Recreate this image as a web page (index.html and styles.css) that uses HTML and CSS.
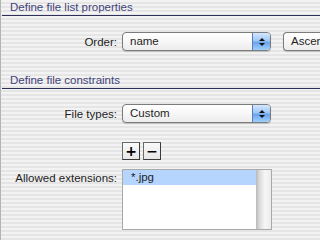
FILE: index.html
```html
<!DOCTYPE html>
<html lang="en">
<head>
  <meta charset="utf-8">
  <title>File list options</title>
  <link rel="stylesheet" href="styles.css">
</head>
<body>

<div class="pane">

  <!-- list properties -->
  <div class="group-title">Define file list properties</div>
  <div class="form-row order-row">
    <span class="field-label">Order:</span>
    <div class="popup">
      <span class="popup-text">name</span>
      <span class="stepper"><i class="arrow-up"></i><i class="arrow-down"></i></span>
    </div>
    <div class="push-button">Ascending</div>
  </div>

  <!-- constraints -->
  <div class="group-title second">Define file constraints</div>
  <div class="form-row types-row">
    <span class="field-label">File types:</span>
    <div class="popup">
      <span class="popup-text">Custom</span>
      <span class="stepper"><i class="arrow-up"></i><i class="arrow-down"></i></span>
    </div>
  </div>

  <div class="form-row buttons-row">
    <span></span>
    <div class="small-buttons">
      <div class="square-button">+</div>
      <div class="square-button">&minus;</div>
    </div>
  </div>

  <div class="form-row list-row">
    <span class="field-label">Allowed extensions:</span>
    <div class="list-box">
      <div class="list-items">
        <div class="list-item selected">*.jpg</div>
      </div>
      <div class="scroll-track"></div>
    </div>
  </div>

</div>

</body>
</html>
```

FILE: styles.css
```css
*{
  box-sizing: border-box;
}

html, body{
  margin: 0;
  height: 100%;
  overflow: hidden;
}

body{
  font-family: "Liberation Sans", Arial, sans-serif;
  font-size: 11.5px;
  color: #1e1e1e;
  background: repeating-linear-gradient(to bottom, #f3f3f3 0px, #f3f3f3 2px, #e5e5e5 2px, #e5e5e5 4px);
}

.pane{
  height: 100%;
  border-left: 1px solid #b4b4b4;
}

.group-title{
  height: 16px;
  line-height: 15px;
  padding-left: 8px;
  margin-left: 1px;
  color: #44447a;
  border-bottom: 1px solid #2f2f5c;
}

.group-title.second{
  margin-top: 22px;
}

.form-row{
  display: grid;
  grid-template-columns: 121px auto;
  align-items: center;
}

.order-row{
  grid-template-columns: 121px 149px 1fr;
  margin-top: 16px;
}

.types-row{
  margin-top: 15px;
}

.buttons-row{
  margin-top: 19px;
}

.list-row{
  margin-top: 9px;
  align-items: start;
}

.field-label{
  text-align: right;
  padding-right: 5px;
}

.list-row .field-label{
  padding-top: 3px;
}

/* popup menus */

.popup{
  width: 149px;
  height: 19px;
  display: flex;
  border: 1px solid #7c7c7c;
  border-radius: 4px;
  background: linear-gradient(to bottom, #ffffff 0%, #f7f7f7 50%, #ececec 100%);
  box-shadow: 0 1px 1px rgba(0, 0, 0, 0.18);
}

.popup-text{
  flex: 1;
  padding-left: 7px;
  line-height: 17px;
}

.stepper{
  width: 18px;
  border-left: 1px solid #5a7fb8;
  border-radius: 0 3px 3px 0;
  background: linear-gradient(to bottom, #d6e8fd 0%, #9cc7f6 45%, #6aa4ea 55%, #9fd0fb 100%);
  display: flex;
  flex-direction: column;
  align-items: center;
  justify-content: center;
  gap: 2px;
}

.arrow-up, .arrow-down{
  width: 0;
  height: 0;
  border-left: 3px solid transparent;
  border-right: 3px solid transparent;
}

.arrow-up{
  border-bottom: 3px solid #111;
}

.arrow-down{
  border-top: 3px solid #111;
}

.push-button{
  margin-left: 12px;
  height: 19px;
  line-height: 17px;
  padding-left: 7px;
  white-space: nowrap;
  overflow: hidden;
  border: 1px solid #7c7c7c;
  border-radius: 4px 0 0 4px;
  border-right: none;
  background: linear-gradient(to bottom, #ffffff 0%, #f7f7f7 50%, #ececec 100%);
  box-shadow: 0 1px 1px rgba(0, 0, 0, 0.18);
}

/* + / - */

.small-buttons{
  display: flex;
  gap: 3px;
}

.square-button{
  width: 18px;
  height: 18px;
  line-height: 16px;
  text-align: center;
  font-family: "DejaVu Sans", sans-serif;
  font-weight: bold;
  font-size: 14px;
  color: #000;
  border: 1px solid #6a6a6a;
  border-right-color: #3a3a3a;
  border-bottom-color: #3a3a3a;
  background: linear-gradient(to bottom, #fafafa 0%, #e6e6e6 100%);
}

/* list */

.list-box{
  width: 150px;
  height: 61px;
  display: flex;
  border: 1px solid #a9a9a9;
  background: #fff;
}

.list-items{
  flex: 1;
}

.list-item{
  height: 15px;
  line-height: 15px;
  padding-left: 8px;
}

.list-item.selected{
  background-color: #b5d5fe;
}

.scroll-track{
  width: 15px;
  background: linear-gradient(to right, #b9b9b9 0%, #dcdcdc 25%, #f6f6f6 60%, #ececec 100%);
}
```
